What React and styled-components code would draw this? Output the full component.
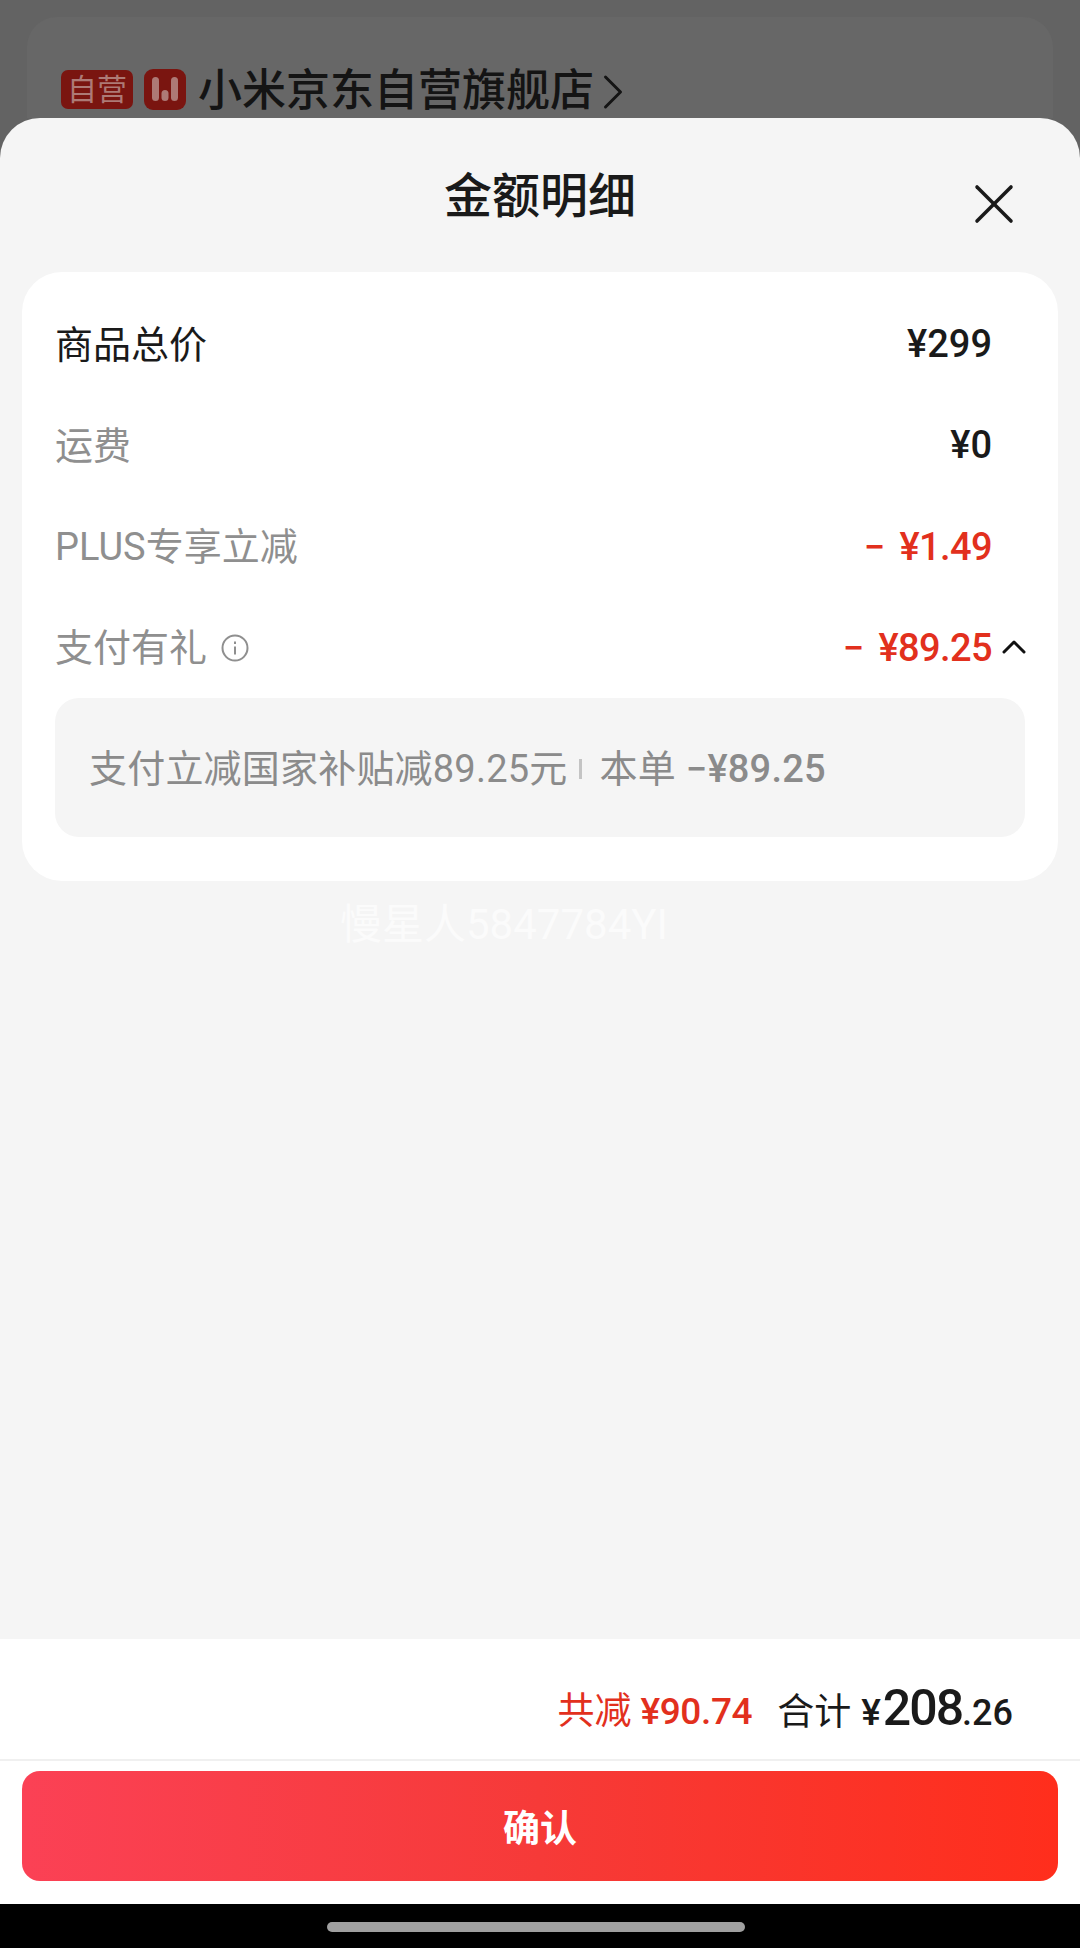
import React from "react";
import styled, { createGlobalStyle } from "styled-components";
import { X, ChevronUp, ChevronRight } from "lucide-react";

const GlobalStyle = createGlobalStyle`
  html, body {
    margin: 0;
    padding: 0;
    background: #000;
  }
  * {
    box-sizing: border-box;
  }
`;

const FONT = `"Roboto", "Noto Sans CJK SC", sans-serif`;

const Page = styled.div`
  width: 1080px;
  height: 1948px;
  display: flex;
  flex-direction: column;
  overflow: hidden;
  background: #636363;
  font-family: ${FONT};
  color: #1a1a1a;
`;

const Backdrop = styled.div`
  height: 118px;
  flex: none;
  padding: 17px 27px 0;
  overflow: hidden;
`;

const StoreCard = styled.div`
  height: 160px;
  padding: 52px 0 0 34px;
  display: flex;
  align-items: flex-start;
  border-radius: 30px;
  background: #676767;
`;

const SelfBadge = styled.div`
  width: 72px;
  height: 39px;
  margin-top: 1px;
  display: flex;
  align-items: center;
  justify-content: center;
  border-radius: 7px;
  background: #7a1510;
  color: #ad7a76;
  font-size: 30px;
  line-height: 1;
`;

const StoreLogo = styled.svg`
  width: 42px;
  height: 41px;
  margin-left: 11px;
  flex: none;
`;

const StoreName = styled.div`
  margin: 2px 0 0 12px;
  font-size: 44px;
  line-height: 41px;
  font-weight: 500;
  color: #141414;
  white-space: nowrap;
`;

const StoreChevron = styled(ChevronRight)`
  flex: none;
  margin: -7px 0 0 -11px;
  color: #141414;
`;

const Sheet = styled.div`
  flex: 1;
  display: flex;
  flex-direction: column;
  min-height: 0;
  border-radius: 40px 40px 0 0;
  background: #f5f5f5;
`;

const SheetHeader = styled.div`
  height: 154px;
  flex: none;
  display: grid;
  grid-template-columns: 1fr auto 1fr;
  padding: 52px 52px 0;
`;

const Title = styled.div`
  grid-column: 2;
  font-size: 48px;
  line-height: 54px;
  font-weight: 500;
  color: #1a1a1a;
`;

const CloseButton = styled.div`
  grid-column: 3;
  justify-self: end;
  width: 68px;
  height: 68px;
  display: flex;
  align-items: center;
  justify-content: center;
  color: #1a1a1a;
`;

const DetailCard = styled.div`
  margin: 0 22px;
  padding: 23px 33px 44px;
  flex: none;
  border-radius: 40px;
  background: #fff;
`;

const Row = styled.div`
  height: 100.75px;
  display: flex;
  align-items: center;
  justify-content: space-between;
  padding-right: ${(props) => (props.$hasToggle ? "0" : "33px")};
`;

const Label = styled.div`
  display: flex;
  align-items: center;
  font-size: 38px;
  line-height: 1;
  color: ${(props) => (props.$strong ? "#1a1a1a" : "#8f8f8f")};
`;

const Amount = styled.div`
  display: flex;
  align-items: center;
  margin-top: ${(props) => (props.$red ? "0" : "-2px")};
  font-size: 38px;
  font-weight: 500;
  line-height: 1;
  letter-spacing: ${(props) => (props.$red ? "-0.6px" : "0")};
  color: ${(props) => (props.$red ? "#e2301d" : "#1a1a1a")};
`;

const Minus = styled.span`
  margin-right: 15px;
`;

const InfoIcon = styled.svg`
  width: 28px;
  height: 28px;
  margin-left: 14px;
`;

const Toggle = styled(ChevronUp)`
  margin: -2px -9px 0 2px;
  color: #111;
`;

const SubBox = styled.div`
  height: 139px;
  padding: 2px 34px 0;
  display: flex;
  align-items: center;
  border-radius: 24px;
  background: #f5f5f5;
  color: #8b8b8b;
  font-size: 38px;
  line-height: 1;
  letter-spacing: 0.2px;
  white-space: nowrap;
`;

const SubDivider = styled.span`
  width: 3px;
  height: 20px;
  margin: 0 17px 0 12px;
  background: #c4c4c4;
`;

const SubAmount = styled.span`
  margin-left: 10px;
  font-weight: 500;
`;

const Watermark = styled.div`
  margin: 21px 0 0 340px;
  font-size: 42px;
  line-height: 46px;
  color: #fbfbfb;
  white-space: nowrap;
`;

const Spacer = styled.div`
  flex: 1;
`;

const Footer = styled.div`
  flex: none;
  height: 265px;
  background: #fff;
`;

const Summary = styled.div`
  height: 122px;
  padding: 18px 67px 0 0;
  display: flex;
  align-items: center;
  justify-content: flex-end;
  border-bottom: 2px solid #f0f0f0;
`;

const Saved = styled.div`
  display: flex;
  align-items: baseline;
  margin-right: 25px;
  font-size: 37px;
  color: #e2301d;
`;

const SavedAmount = styled.span`
  margin-left: 9px;
  font-weight: 500;
  font-size: 37px;
  letter-spacing: -0.4px;
`;

const Total = styled.div`
  display: flex;
  align-items: baseline;
  font-size: 37px;
  color: #1a1a1a;
`;

const Yen = styled.span`
  margin: 0 2px 0 10px;
  font-weight: 500;
`;

const TotalBig = styled.span`
  font-size: 50px;
  font-weight: 500;
  letter-spacing: -2px;
`;

const TotalCents = styled.span`
  font-size: 36px;
  font-weight: 500;
`;

const ConfirmButton = styled.div`
  height: 110px;
  margin: 10px 22px 0;
  display: flex;
  align-items: center;
  justify-content: center;
  border-radius: 18px;
  background: linear-gradient(90deg, #fb4155, #f63a38 50%, #ff2e1c);
  color: #fff;
  font-size: 37px;
  font-weight: 700;
`;

const NavBar = styled.div`
  flex: none;
  height: 44px;
  display: flex;
  justify-content: center;
  padding: 18px 8px 0 0;
  background: #000;
`;

const HomeBar = styled.div`
  width: 418px;
  height: 10px;
  border-radius: 5px;
  background: #a0a0a0;
`;

export default function App() {
  return (
    <>
      <GlobalStyle />
      <Page>
        <Backdrop>
          <StoreCard>
            <SelfBadge>自营</SelfBadge>
            <StoreLogo viewBox="0 0 42 41">
              <rect width="42" height="41" rx="9" fill="#7a1510" />
              <rect x="8" y="8" width="7" height="24" rx="3.5" fill="#ad7a76" />
              <rect x="17.5" y="21" width="7" height="11" rx="3.5" fill="#ad7a76" />
              <rect x="27" y="8" width="7" height="24" rx="3.5" fill="#ad7a76" />
            </StoreLogo>
            <StoreName>小米京东自营旗舰店</StoreName>
            <StoreChevron size={60} strokeWidth={1.2} />
          </StoreCard>
        </Backdrop>
        <Sheet>
          <SheetHeader>
            <Title>金额明细</Title>
            <CloseButton>
              <X size={68} strokeWidth={1.25} />
            </CloseButton>
          </SheetHeader>
          <DetailCard>
            <Row>
              <Label $strong>商品总价</Label>
              <Amount>¥299</Amount>
            </Row>
            <Row>
              <Label>运费</Label>
              <Amount>¥0</Amount>
            </Row>
            <Row>
              <Label>PLUS专享立减</Label>
              <Amount $red>
                <Minus>−</Minus>¥1.49
              </Amount>
            </Row>
            <Row $hasToggle>
              <Label>
                支付有礼
                <InfoIcon viewBox="0 0 28 28" fill="none" stroke="#8f8f8f" strokeWidth="2">
                  <circle cx="14" cy="14" r="12.5" />
                  <path d="M14 12.5V20.5" />
                  <path d="M14 7.5v2.5" />
                </InfoIcon>
              </Label>
              <Amount $red>
                <Minus>−</Minus>¥89.25
                <Toggle size={40} strokeWidth={1.8} />
              </Amount>
            </Row>
            <SubBox>
              支付立减国家补贴减89.25元
              <SubDivider />
              本单
              <SubAmount>−¥89.25</SubAmount>
            </SubBox>
          </DetailCard>
          <Watermark>慢星人5847784YI</Watermark>
          <Spacer />
          <Footer>
            <Summary>
              <Saved>
                共减<SavedAmount>¥90.74</SavedAmount>
              </Saved>
              <Total>
                合计<Yen>¥</Yen>
                <TotalBig>208</TotalBig>
                <TotalCents>.26</TotalCents>
              </Total>
            </Summary>
            <ConfirmButton>确认</ConfirmButton>
          </Footer>
          <NavBar>
            <HomeBar />
          </NavBar>
        </Sheet>
      </Page>
    </>
  );
}
